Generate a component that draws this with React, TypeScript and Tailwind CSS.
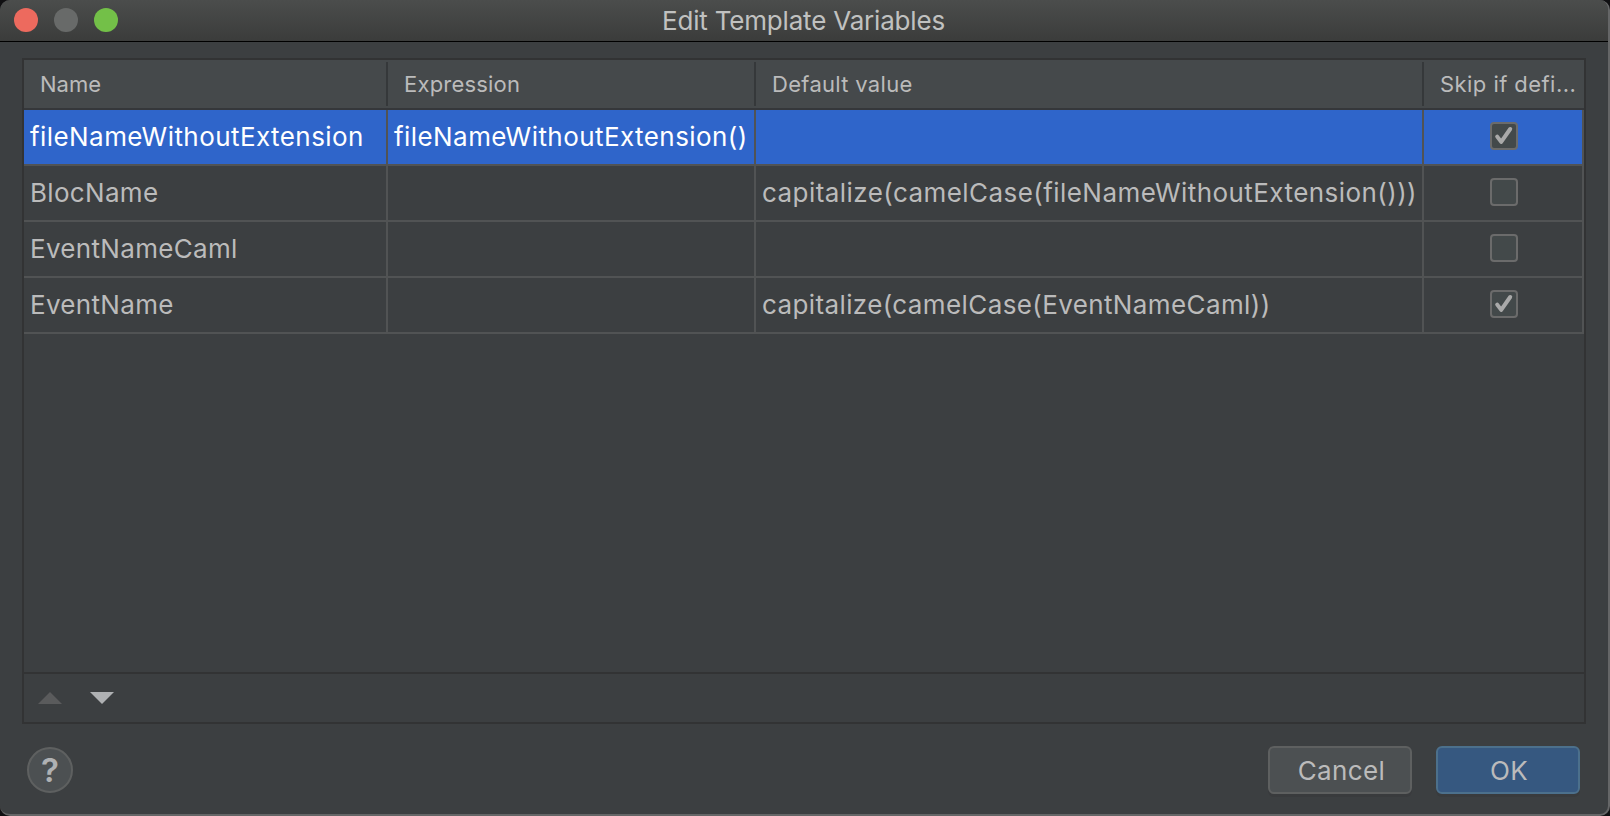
type Row = { name: string; expression: string; value: string; skip: boolean };

const rows: Row[] = [
  { name: "fileNameWithoutExtension", expression: "fileNameWithoutExtension()", value: "", skip: true },
  { name: "BlocName", expression: "", value: "capitalize(camelCase(fileNameWithoutExtension()))", skip: false },
  { name: "EventNameCaml", expression: "", value: "", skip: false },
  { name: "EventName", expression: "", value: "capitalize(camelCase(EventNameCaml))", skip: true },
];

const headers = [
  { label: "Name", spacing: "tracking-normal" },
  { label: "Expression", spacing: "tracking-[0.2px]" },
  { label: "Default value", spacing: "tracking-[0.3px]" },
  { label: "Skip if defi...", spacing: "tracking-[0.44px]" },
];

const columns = "grid grid-cols-[364px_368px_668px_160px]";

function Checkbox({ checked }: { checked: boolean }) {
  return (
    <span className="ml-0.5 -mt-0.5 block size-7 rounded-[4px] border-2 border-[#6b6b6b] bg-[#43494a]">
      {checked && (
        <svg viewBox="0 0 24 24" className="size-6" fill="none" stroke="#a9a9a9" strokeWidth="4" strokeLinecap="round" strokeLinejoin="round">
          <path d="M5.2 12.6L9.2 17.9L18.2 5" />
        </svg>
      )}
    </span>
  );
}

function TableRow({ row, selected }: { row: Row; selected: boolean }) {
  const cell = "flex items-center border-r-2 border-[#515354] pl-1.5 whitespace-nowrap";
  return (
    <div
      className={
        selected
          ? `${columns} h-14 border-b-2 border-[#515354] bg-[#2f65ca] tracking-[0.43px] text-white`
          : `${columns} h-14 border-b-2 border-[#515354] tracking-[0.32px] text-[#bbbbbb]`
      }
    >
      <div className={cell}>{row.name}</div>
      <div className={cell}>{row.expression}</div>
      <div className={`${cell} ${row.value.length > 40 ? "tracking-[0.44px]" : "tracking-[0.39px]"}`}>{row.value}</div>
      <div className="flex items-center justify-center border-r-2 border-[#515354]">
        <Checkbox checked={row.skip} />
      </div>
    </div>
  );
}

export default function App() {
  return (
    <div className="h-[816px] w-[1610px] bg-[#101012] font-['Inter',sans-serif] text-[26px] leading-none text-[#bbbbbb]">
      <div className="flex h-full w-full flex-col overflow-hidden rounded-[10px] border-r-2 border-b-2 border-[#656667] bg-[#3c3f41]">
        <header className="grid h-[42px] shrink-0 grid-cols-[1fr_auto_1fr] items-center border-b border-black bg-linear-to-b from-[#4b4d4c] to-[#3b3c3b]">
          <div className="-mt-px flex gap-4 pl-3.5">
            <span className="size-6 rounded-full bg-[#ed6a5e]" />
            <span className="size-6 rounded-full bg-[#686a69]" />
            <span className="size-6 rounded-full bg-[#73c048]" />
          </div>
          <h1 className="pt-px pr-px tracking-[-0.19px] text-[#c0c1c0]">Edit Template Variables</h1>
        </header>

        <main className="mt-4 ml-[22px] flex h-[666px] w-[1564px] shrink-0 flex-col border-2 border-[#323334]">
          <div className="flex h-[50px] shrink-0 border-b-2 border-[#35373a] bg-[#45494b] py-0.5 text-[22px]">
            <div className={columns}>
              {headers.map((h, i) => (
                <div
                  key={h.label}
                  className={
                    i < 3
                      ? `flex items-center border-r-2 border-[#35383a] pl-4 whitespace-nowrap ${h.spacing}`
                      : `flex items-center pl-4 whitespace-nowrap ${h.spacing}`
                  }
                >
                  {h.label}
                </div>
              ))}
            </div>
          </div>
          <div className="flex-1">
            {rows.map((row, i) => (
              <TableRow key={row.name} row={row} selected={i === 0} />
            ))}
          </div>
          <div className="flex h-[50px] shrink-0 items-start gap-7 border-t-2 border-[#323334] pt-[18px] pl-3.5">
            <svg width="24" height="12" viewBox="0 0 24 12" fill="#5a5b5c">
              <path d="M0 12L12 0L24 12Z" />
            </svg>
            <svg width="24" height="12" viewBox="0 0 24 12" fill="#afb1b3">
              <path d="M0 0H24L12 12Z" />
            </svg>
          </div>
        </main>

        <footer className="mt-[22px] flex h-12 shrink-0 items-center pr-7 pl-[27px]">
          <button className="flex size-[46px] items-center justify-center rounded-full border-2 border-[#5e6060] bg-[#4c5052] text-[33px] font-semibold text-[#afb1b3]">
            ?
          </button>
          <div className="ml-auto flex gap-6 tracking-[0.38px]">
            <button className="h-12 w-36 rounded-[6px] border-2 border-[#5e6060] bg-[#4c5052] pt-px pl-[3px] shadow-[0_3px_0_#393b3d]">Cancel</button>
            <button className="h-12 w-36 rounded-[6px] border-2 border-[#4c708c] bg-[#365880] pt-px pl-[2px] shadow-[0_3px_0_#393b3d]">OK</button>
          </div>
        </footer>
      </div>
    </div>
  );
}
